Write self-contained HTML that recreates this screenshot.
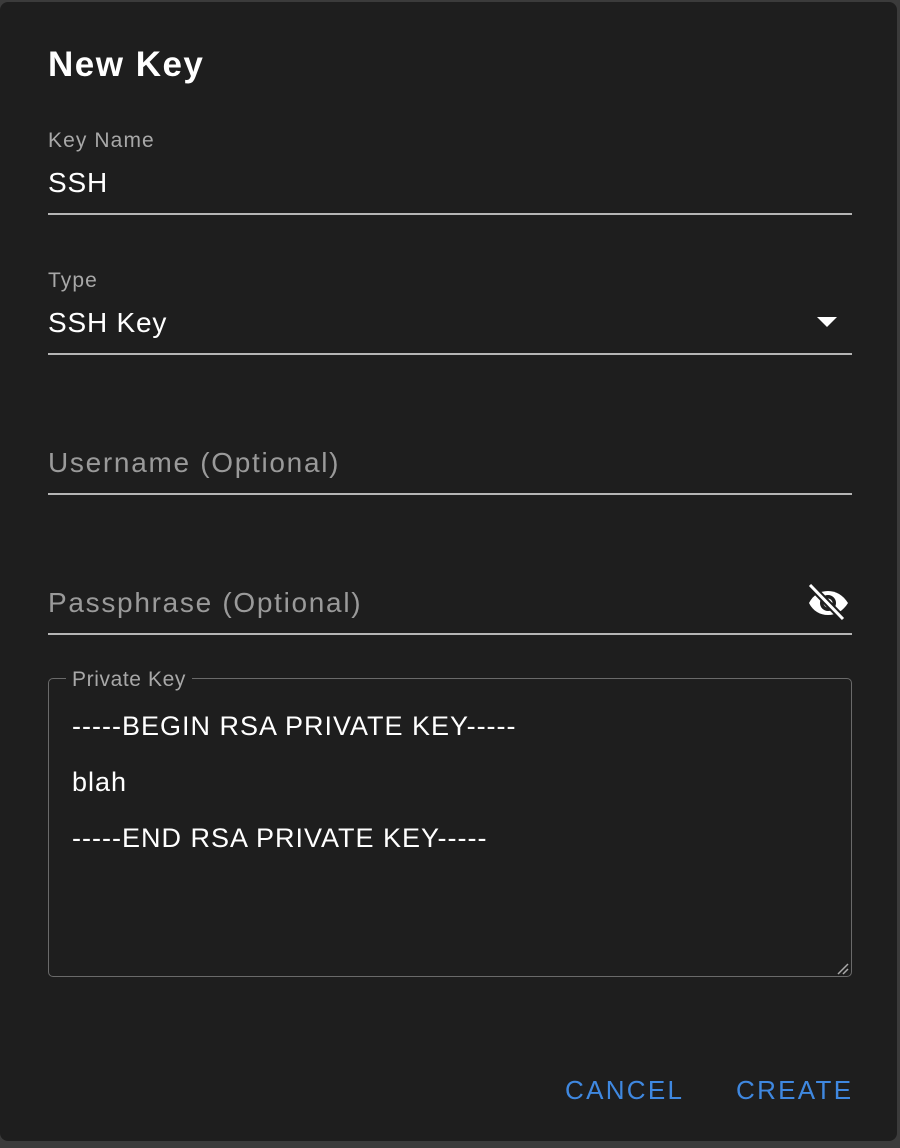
<!DOCTYPE html>
<html><head><style>
html,body{margin:0;padding:0;width:900px;height:1148px;background:#3b3b3b;overflow:hidden;font-family:"Liberation Sans",Roboto,sans-serif;}
.dlg{position:absolute;left:0;top:2px;width:897px;height:1139px;background:#1e1e1e;border-radius:8px;}
.t{position:absolute;left:48px;top:45px;color:#fff;font-size:35px;font-weight:bold;letter-spacing:1.5px;}
.lbl{position:absolute;left:48px;color:#a8a8a8;font-size:21px;letter-spacing:1.1px;}
.val{position:absolute;left:48px;color:#fff;font-size:28px;letter-spacing:0.8px;}
.ph{position:absolute;left:48px;color:#9a9a9a;font-size:28px;letter-spacing:1.7px;}
.line{position:absolute;left:48px;width:804px;height:2px;background:#b5b5b5;}
.box{position:absolute;left:48px;top:678px;width:802px;height:297px;border:1.5px solid #6a6a6a;border-radius:5px;}
.legend{position:absolute;left:66px;top:668px;padding:0 6px;background:#1e1e1e;color:#a8a8a8;font-size:21px;letter-spacing:0.6px;}
.k{position:absolute;left:72px;color:#fff;font-size:27px;letter-spacing:1px;}
.btn{position:absolute;top:1075px;color:#3f88e0;font-size:26px;letter-spacing:2.3px;}
</style></head><body>
<div class="dlg"></div>
<div class="t">New Key</div>
<div class="lbl" style="top:129px">Key Name</div>
<div class="val" style="top:167px">SSH</div>
<div class="line" style="top:213px"></div>
<div class="lbl" style="top:269px">Type</div>
<div class="val" style="top:307px">SSH Key</div>
<svg style="position:absolute;left:817px;top:317px" width="20" height="11"><path d="M0 0H20L10 10Z" fill="#fff"/></svg>
<div class="line" style="top:353px"></div>
<div class="ph" style="top:447px">Username (Optional)</div>
<div class="line" style="top:493px"></div>
<div class="ph" style="top:587px">Passphrase (Optional)</div>
<svg style="position:absolute;left:806px;top:584px" width="46" height="40" viewBox="0 0 46 40">
<path d="M3 19C7 11 14 7 22 7S37 11 42 19C37 27 30 31 22 31S7 27 3 19Z" fill="#fff"/>
<circle cx="22" cy="19" r="8" fill="#1e1e1e"/>
<circle cx="22" cy="19" r="4.5" fill="#fff"/>
<path d="M4 1L37 35" stroke="#1e1e1e" stroke-width="7"/>
<path d="M4 1L37 35" stroke="#fff" stroke-width="3"/>
</svg>
<div class="line" style="top:633px"></div>
<div class="box"></div>
<div class="legend">Private Key</div>
<div class="k" style="top:711px">-----BEGIN RSA PRIVATE KEY-----</div>
<div class="k" style="top:767px">blah</div>
<div class="k" style="top:823px">-----END RSA PRIVATE KEY-----</div>
<svg style="position:absolute;left:836px;top:962px" width="14" height="14"><path d="M2 12L12 2M7 12L12 7" stroke="#aaa" stroke-width="1.5"/></svg>
<div class="btn" style="left:565px">CANCEL</div>
<div class="btn" style="left:736px">CREATE</div>
</body></html>
